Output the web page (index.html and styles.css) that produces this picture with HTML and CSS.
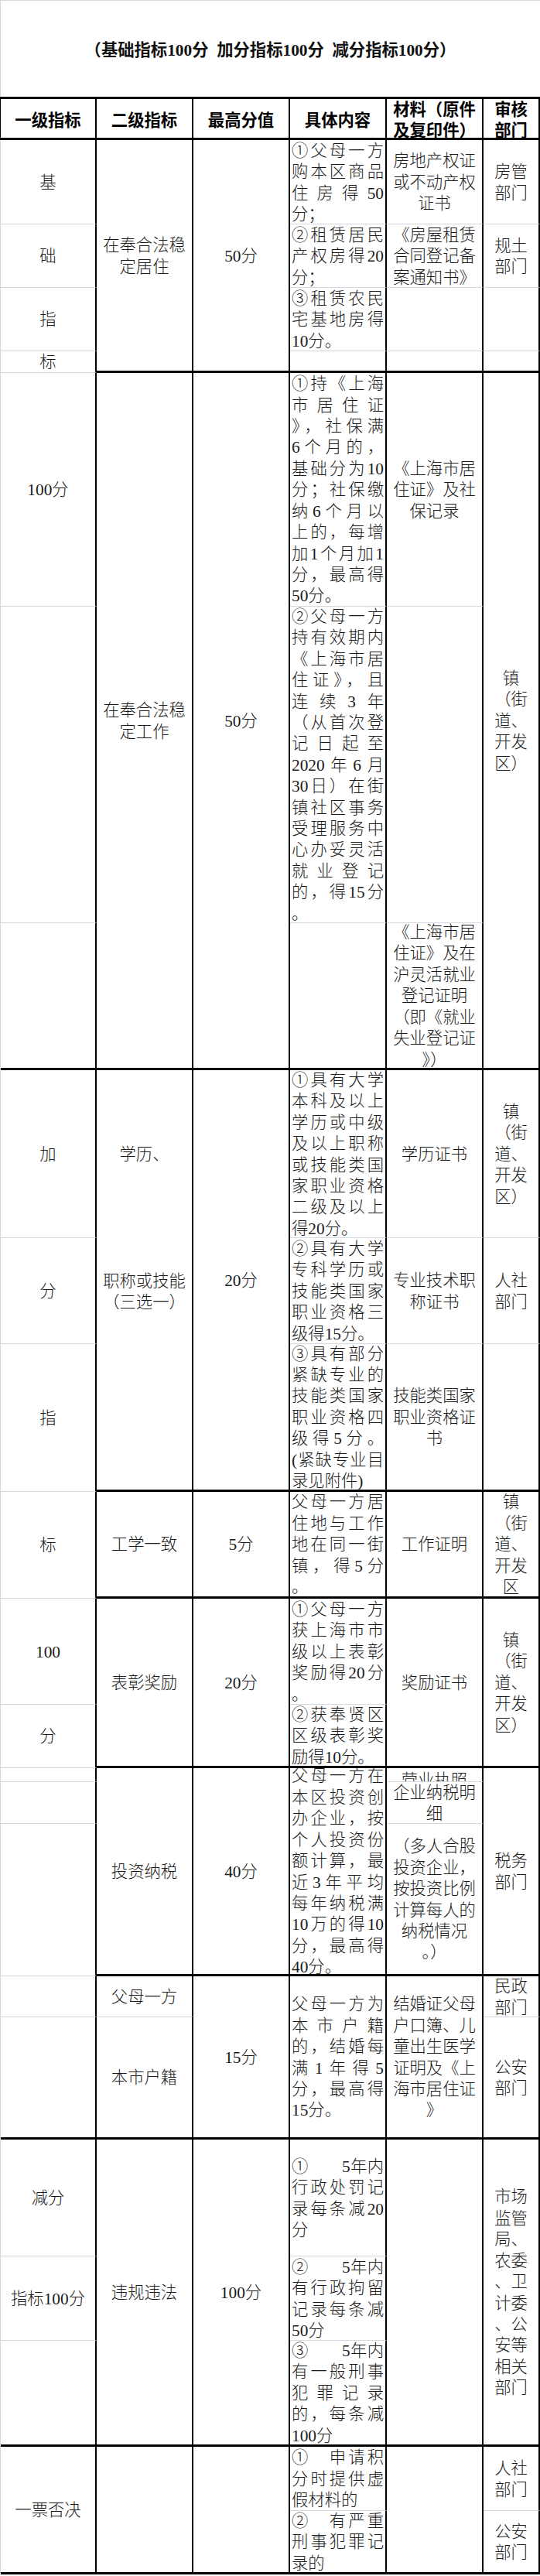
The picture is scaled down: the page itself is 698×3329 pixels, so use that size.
FILE: index.html
```html
<!DOCTYPE html>
<html lang="zh-CN">
<head>
<meta charset="utf-8">
<title>积分指标</title>
<link rel="stylesheet" href="styles.css">
</head>
<body>
<div class="sheet">
  <div class="title">（基础指标100分&ensp;加分指标100分&ensp;减分指标100分）</div>

  <div class="h first">一级指标</div>
  <div class="h">二级指标</div>
  <div class="h">最高分值</div>
  <div class="h">具体内容</div>
  <div class="h">材料（原件<br>及复印件）</div>
  <div class="h">审核<br>部门</div>

  <!-- R1 -->
  <div class="c g">基</div>
  <div class="c t s4">在奉合法稳<br>定居住</div>
  <div class="c t s4">50分</div>
  <div class="c txt g"><p>①父母一方</p><p>购本区商品</p><p>住房得50</p><p>分；</p></div>
  <div class="c g">房地产权证<br>或不动产权<br>证书</div>
  <div class="c g">房管<br>部门</div>
  <!-- R2 -->
  <div class="c g">础</div>
  <div class="c txt g"><p>②租赁居民</p><p>产权房得20</p><p>分；</p></div>
  <div class="c g">《房屋租赁<br>合同登记备<br>案通知书》</div>
  <div class="c g">规土<br>部门</div>
  <!-- R3 -->
  <div class="c g">指</div>
  <div class="c txt g"><p>③租赁农民</p><p>宅基地房得</p><p>10分。</p></div>
  <div class="c g"></div>
  <div class="c g"></div>
  <!-- R4 -->
  <div class="c g">标</div>
  <div class="c txt t"></div>
  <div class="c t"></div>
  <div class="c t"></div>

  <!-- R5 -->
  <div class="c g">100分</div>
  <div class="c t s3">在奉合法稳<br>定工作</div>
  <div class="c t s3">50分</div>
  <div class="c txt g"><p>①持《上海</p><p>市居住证</p><p>》，社保满</p><p>6个月的，</p><p>基础分为10</p><p>分；社保缴</p><p>纳6个月以</p><p>上的，每增</p><p>加1个月加1</p><p>分，最高得</p><p>50分。</p></div>
  <div class="c g">《上海市居<br>住证》及社<br>保记录</div>
  <div class="c t s3">镇<br>（街<br>道、<br>开发<br>区）</div>
  <!-- R6 -->
  <div class="c g"></div>
  <div class="c txt g"><p>②父母一方</p><p>持有效期内</p><p>《上海市居</p><p>住证》，且</p><p>连续3年</p><p>（从首次登</p><p>记日起至</p><p>2020年6月</p><p>30日）在街</p><p>镇社区事务</p><p>受理服务中</p><p>心办妥灵活</p><p>就业登记</p><p>的，得15分</p><p>。</p></div>
  <div class="c g"></div>
  <!-- R7 -->
  <div class="c t"></div>
  <div class="c txt t"></div>
  <div class="c t">《上海市居<br>住证》及在<br>沪灵活就业<br>登记证明<br>（即《就业<br>失业登记证<br>》）</div>

  <!-- R8 -->
  <div class="c g">加</div>
  <div class="c">学历、</div>
  <div class="c t s3">20分</div>
  <div class="c txt g"><p>①具有大学</p><p>本科及以上</p><p>学历或中级</p><p>及以上职称</p><p>或技能类国</p><p>家职业资格</p><p>二级及以上</p><p>得20分。</p></div>
  <div class="c g">学历证书</div>
  <div class="c g">镇<br>（街<br>道、<br>开发<br>区）</div>
  <!-- R9 -->
  <div class="c g">分</div>
  <div class="c">职称或技能<br>（三选一）</div>
  <div class="c txt g"><p>②具有大学</p><p>专科学历或</p><p>技能类国家</p><p>职业资格三</p><p>级得15分。</p></div>
  <div class="c g">专业技术职<br>称证书</div>
  <div class="c g">人社<br>部门</div>
  <!-- R10 -->
  <div class="c g">指</div>
  <div class="c t"></div>
  <div class="c txt t"><p>③具有部分</p><p>紧缺专业的</p><p>技能类国家</p><p>职业资格四</p><p>级得5分。</p><p>(紧缺专业目</p><p>录见附件)</p></div>
  <div class="c t">技能类国家<br>职业资格证<br>书</div>
  <div class="c t"></div>

  <!-- R11 -->
  <div class="c g">标</div>
  <div class="c t">工学一致</div>
  <div class="c t">5分</div>
  <div class="c txt t"><p>父母一方居</p><p>住地与工作</p><p>地在同一街</p><p>镇，得5分</p><p>。</p></div>
  <div class="c t">工作证明</div>
  <div class="c t">镇<br>（街<br>道、<br>开发<br>区</div>

  <!-- R12 -->
  <div class="c g">100</div>
  <div class="c t s2">表彰奖励</div>
  <div class="c t s2">20分</div>
  <div class="c txt g"><p>①父母一方</p><p>获上海市市</p><p>级以上表彰</p><p>奖励得20分</p><p>。</p></div>
  <div class="c t s2">奖励证书</div>
  <div class="c t s2">镇<br>（街<br>道、<br>开发<br>区）</div>
  <!-- R13 -->
  <div class="c g">分</div>
  <div class="c txt t"><p>②获奉贤区</p><p>区级表彰奖</p><p>励得10分。</p></div>

  <!-- R14 -->
  <div class="c g"></div>
  <div class="c t s3">投资纳税</div>
  <div class="c t s3">40分</div>
  <div class="c txt t s3"><p>父母一方在</p><p>本区投资创</p><p>办企业，按</p><p>个人投资份</p><p>额计算，最</p><p>近3年平均</p><p>每年纳税满</p><p>10万的得10</p><p>分，最高得</p><p>40分。</p></div>
  <div class="c g clip">营业执照</div>
  <div class="c t s3">税务<br>部门</div>
  <!-- R15 -->
  <div class="c g"></div>
  <div class="c g">企业纳税明<br>细</div>
  <!-- R16 -->
  <div class="c g"></div>
  <div class="c t">（多人合股<br>投资企业，<br>按投资比例<br>计算每人的<br>纳税情况<br>。）</div>

  <!-- R17 -->
  <div class="c g"></div>
  <div class="c g">父母一方</div>
  <div class="c t s2">15分</div>
  <div class="c txt t s2"><p>父母一方为</p><p>本市户籍</p><p>的，结婚每</p><p>满1年得5</p><p>分，最高得</p><p>15分。</p></div>
  <div class="c t s2">结婚证父母<br>户口簿、儿<br>童出生医学<br>证明及《上<br>海市居住证<br>》</div>
  <div class="c g">民政<br>部门</div>
  <!-- R18 -->
  <div class="c t"></div>
  <div class="c t">本市户籍</div>
  <div class="c t">公安<br>部门</div>

  <!-- R19 -->
  <div class="c g">减分</div>
  <div class="c t s3">违规违法</div>
  <div class="c t s3">100分</div>
  <div class="c txt g"><p>①　　5年内</p><p>行政处罚记</p><p>录每条减20</p><p>分</p></div>
  <div class="c t s3"></div>
  <div class="c t s3">市场<br>监管<br>局、<br>农委<br>、卫<br>计委<br>、公<br>安等<br>相关<br>部门</div>
  <!-- R20 -->
  <div class="c g">指标100分</div>
  <div class="c txt g"><p>②　　5年内</p><p>有行政拘留</p><p>记录每条减</p><p>50分</p></div>
  <!-- R21 -->
  <div class="c t"></div>
  <div class="c txt t"><p>③　　5年内</p><p>有一般刑事</p><p>犯罪记录</p><p>的，每条减</p><p>100分</p></div>

  <!-- R22 -->
  <div class="c t s2">一票否决</div>
  <div class="c t s2"></div>
  <div class="c t s2"></div>
  <div class="c txt g"><p>①　申请积</p><p>分时提供虚</p><p>假材料的</p></div>
  <div class="c t s2"></div>
  <div class="c g">人社<br>部门</div>
  <!-- R23 -->
  <div class="c txt t"><p>②　有严重</p><p>刑事犯罪记</p><p>录的</p></div>
  <div class="c t">公安<br>部门</div>
</div>
</body>
</html>
```

FILE: styles.css
```css
* {
  box-sizing: border-box;
  margin: 0;
  padding: 0;
}

html,
body {
  background: #ffffff;
}

body {
  margin: 0;
  width: 698px;
}

.sheet {
  display: grid;
  grid-template-columns: 124px 125px 125px 125px 125px 73px;
  grid-template-rows:
    124px 56px
    109px 82px 82px 28px
    302px 409px 190px
    217px 137px 191px
    138px
    137px 82px
    18px 54px 197px
    53px 158px
    151px 109px 137px
    83px 82px;
  width: 698px;
  border-top: 1px solid #d4d9e1;
  border-left: 1px solid #d4d9e1;
  font-family: "Liberation Serif", "Noto Sans CJK SC", serif;
  font-size: 21.33px;
  font-weight: 300;
  line-height: 27.4px;
  color: #1a1a1a;
}

.title {
  grid-column: 1 / -1;
  display: flex;
  align-items: center;
  justify-content: center;
  padding-top: 5px;
  font-weight: bold;
  color: #111;
}

.h {
  display: flex;
  align-items: center;
  justify-content: center;
  text-align: center;
  border-top: 3px solid #000;
  border-bottom: 3px solid #000;
  border-right: 2px solid #000;
  font-family: "Noto Sans CJK SC", sans-serif;
  font-weight: bold;
  line-height: 26.7px;
  color: #000;
  padding-top: 2px;
}

.h.first {
  box-shadow: -1px 0 0 #000;
}

.c {
  display: flex;
  flex-direction: column;
  justify-content: center;
  align-items: center;
  text-align: center;
  border-right: 2px solid #000;
  padding: 3px 2px 0;
  min-width: 0;
}

.g {
  border-bottom: 1px solid #d4d9e1;
}

.t {
  border-bottom: 3px solid #000;
}

.s2 {
  grid-row: span 2;
}

.s3 {
  grid-row: span 3;
}

.s4 {
  grid-row: span 4;
}

.txt {
  align-items: stretch;
  text-align: left;
  padding: 3px 2px 0 2px;
}

.txt p {
  text-align: justify;
  text-align-last: justify;
}

.txt p:last-child {
  text-align-last: auto;
}

.clip {
  justify-content: flex-start;
  overflow: hidden;
  padding-top: 3px;
}
```
